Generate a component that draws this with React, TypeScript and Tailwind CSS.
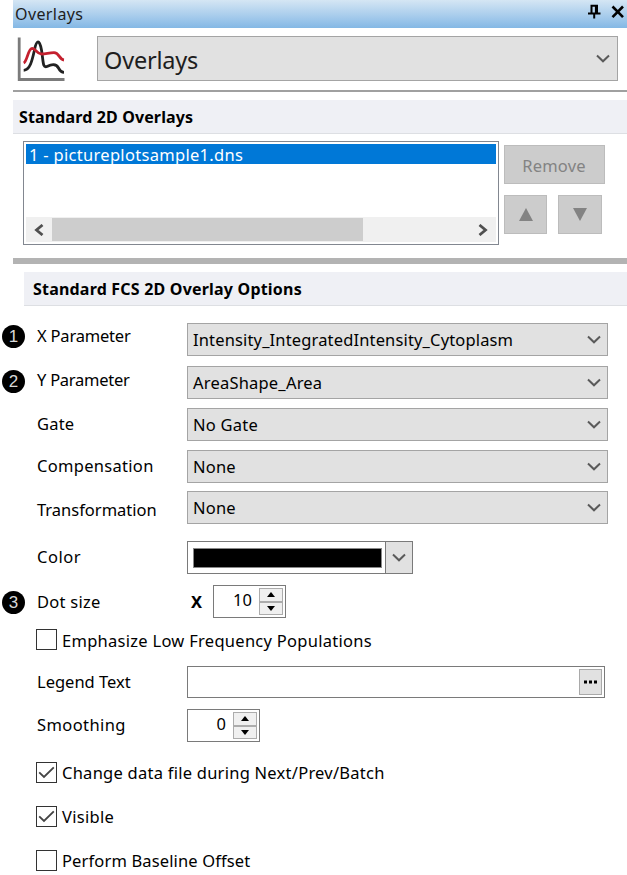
import React, { useState } from "react";

interface SelectProps {
  value: string;
  textClass: string;
}

const Chevron = () => (
  <svg width="14" height="9" viewBox="0 0 14 9" fill="none" className="shrink-0">
    <path d="M1 1.5 7 7.3 13 1.5" stroke="#5a5a5a" strokeWidth="2" />
  </svg>
);

const Select: React.FC<SelectProps> = ({ value, textClass }) => (
  <button className="flex h-[33px] w-[421px] items-center justify-between border border-[#a4a4a4] bg-[#e1e1e1] pl-[5px] pr-[6px] text-left">
    <span className={textClass}>{value}</span>
    <Chevron />
  </button>
);

interface RowProps {
  label: string;
  rowClass: string;
  labelClass: string;
  badge?: string;
  badgeClass?: string;
  children: React.ReactNode;
}

// Numbered badge, label and the control next to it
const Row: React.FC<RowProps> = ({
  label,
  rowClass,
  labelClass,
  badge,
  badgeClass,
  children,
}) => (
  <div className={`flex items-start ${rowClass}`}>
    <div className="w-[37px] shrink-0 pl-[2px]">
      {badge && (
        <div
          className={`flex h-[23px] w-[23px] items-center justify-center rounded-full bg-black font-['Liberation_Sans',sans-serif] text-[17px] text-[#d8d8d8] ${badgeClass}`}
        >
          {badge}
        </div>
      )}
    </div>
    <div className="w-[150px] shrink-0">
      <span className={`block ${labelClass}`}>{label}</span>
    </div>
    {children}
  </div>
);

interface SpinnerProps {
  value: number;
  onChange: (value: number) => void;
}

const Spinner: React.FC<SpinnerProps> = ({ value, onChange }) => (
  <div className="flex h-[33px] w-[73px] items-center justify-end border border-[#7a7a7a] bg-white pr-[2px]">
    <span className="mb-[3px] mr-[7px]">{value}</span>
    <div className="flex h-[27px] w-[24px] flex-col border border-[#acacac] bg-[#f0f0f0]">
      <button
        onClick={() => onChange(value + 1)}
        className="flex flex-1 items-center justify-center border-b border-[#acacac]"
      >
        <svg width="8" height="5" viewBox="0 0 8 5">
          <path d="M4 0 8 5H0Z" />
        </svg>
      </button>
      <button
        onClick={() => onChange(Math.max(0, value - 1))}
        className="flex flex-1 items-center justify-center border-t border-[#acacac]"
      >
        <svg width="8" height="5" viewBox="0 0 8 5">
          <path d="M0 0H8L4 5Z" />
        </svg>
      </button>
    </div>
  </div>
);

interface CheckProps {
  label: string;
  checked: boolean;
  onToggle: () => void;
  rowClass: string;
  textClass: string;
}

const Check: React.FC<CheckProps> = ({
  label,
  checked,
  onToggle,
  rowClass,
  textClass,
}) => (
  <div className={`flex items-start pl-[36px] ${rowClass}`}>
    <button onClick={onToggle} className="flex h-[21px] items-center">
      <span className="flex h-[21px] w-[21px] items-center justify-center border border-[#333] bg-white">
        {checked && (
          <svg width="17" height="17" viewBox="0 0 17 17" fill="none">
            <path d="M1.2 8.3 6 13 15.8 3.3" stroke="#444" strokeWidth="1.8" />
          </svg>
        )}
      </span>
      <span className={`ml-[5px] ${textClass}`}>{label}</span>
    </button>
  </div>
);

export default function App() {
  const [dotSize, setDotSize] = useState(10);
  const [smoothing, setSmoothing] = useState(0);
  const [emphasize, setEmphasize] = useState(false);
  const [changeFile, setChangeFile] = useState(true);
  const [visible, setVisible] = useState(true);
  const [baseline, setBaseline] = useState(false);

  return (
    <div className="h-[875px] w-[627px] overflow-hidden whitespace-nowrap bg-white font-['Noto_Sans','Open_Sans',sans-serif] text-[16.5px] leading-[24px] text-black">
      <div className="pl-[13px]">
        {/* Title bar */}
        <div className="flex h-[28px] items-center justify-between bg-linear-to-b from-[#d5e6f4] to-[#84b8e5] pl-[2px] pr-[2px]">
          <span className="text-[16px] tracking-[0.4px] text-[#1e1e1e]">Overlays</span>
          <div className="flex items-center gap-[10px] pb-[4px]">
            <svg width="14" height="16" viewBox="0 0 14 16" fill="none" stroke="#000">
              <path d="M4.5 9V1.8H10V9M1 9.6H13.5M7.2 10V14.4" strokeWidth="2" />
              <path d="M9.3 2V9" strokeWidth="2.8" />
            </svg>
            <svg width="14" height="14" viewBox="0 0 14 14" fill="none" stroke="#000">
              <path d="M1.5 1.5 12 12.2M12 1.5 1.5 12.2" strokeWidth="2.6" />
            </svg>
          </div>
        </div>

        {/* Section picker */}
        <div className="flex h-[62px] items-start pl-[4px] pt-[8px]">
          <svg width="49" height="46" viewBox="0 0 49 46" fill="none" className="mr-[31px]">
            <path d="M2.2 1.5V43.5H47.5" stroke="#7b7b7b" strokeWidth="2.8" />
            <path
              d="M6.7 34.3C13 34 15 25 17.5 14C19.5 3.5 22.5 3 24.5 14C26.5 26 25.5 32 30 30.5C34 28.5 39 27 41.5 32C43 35 44.5 36.3 47 36.3"
              stroke="#222"
              strokeWidth="2.8"
            />
            <path
              d="M6.7 27C10.5 25 11 12.3 15.2 12.3C19 12.5 19.5 18 24.5 18C29 18 32 16.7 37 16.7C42.5 16.7 42 23.5 47 24"
              stroke="#c4202e"
              strokeWidth="2.8"
            />
          </svg>
          <button className="flex h-[45px] w-[521px] items-center justify-between border border-[#a4a4a4] bg-[#e1e1e1] pl-[6px] pr-[7px]">
            <span className="pt-[2px] text-[23.5px] leading-[32px] tracking-[-0.2px] text-[#1e1e1e]">
              Overlays
            </span>
            <Chevron />
          </button>
        </div>
        <div className="h-[2px] bg-[#a0a0a0]" />

        {/* Overlay list */}
        <h2 className="mt-[8px] flex h-[34px] items-center border-b border-[#dddfe3] bg-[#eff0f5] pl-[6px] font-bold">
          <span className="text-[16px] tracking-[0.13px]">Standard 2D Overlays</span>
        </h2>
        <div className="flex h-[123px] items-start pl-[10px] pt-[7px]">
          <div className="flex h-[104px] w-[476px] flex-col justify-between border border-[#828790] bg-white p-[2px]">
            <div className="flex h-[20px] items-center bg-[#0078d7] pl-[3px] text-white">
              <span className="pt-px tracking-[0.3px]">1 - pictureplotsample1.dns</span>
            </div>
            <div className="flex h-[25px] items-center justify-between bg-[#f0f0f0] pr-[8px]">
              <div className="flex h-full items-center">
                <div className="flex w-[26px] justify-center">
                  <svg width="10" height="12" viewBox="0 0 10 12" fill="none">
                    <path d="M8.5 1 2.5 6 8.5 11" stroke="#505050" strokeWidth="2.8" />
                  </svg>
                </div>
                <div className="h-[23px] w-[311px] bg-[#cdcdcd]" />
              </div>
              <svg width="10" height="12" viewBox="0 0 10 12" fill="none">
                <path d="M1.5 1 7.5 6 1.5 11" stroke="#505050" strokeWidth="2.8" />
              </svg>
            </div>
          </div>
          <div className="ml-[5px] mt-[4px]">
            <button className="flex h-[39px] w-[101px] items-center justify-center border border-[#bcbcbc] bg-[#cccccc] text-[#838383]">
              <span className="pr-px pt-[2px] tracking-[0.2px]">Remove</span>
            </button>
            <div className="mt-[11px] flex gap-[11px]">
              <button className="flex h-[39px] w-[43px] items-center justify-center border border-[#bcbcbc] bg-[#cccccc]">
                <svg width="14" height="13" viewBox="0 0 14 13" fill="#838383">
                  <path d="M7 0 14 13H0Z" />
                </svg>
              </button>
              <button className="flex h-[39px] w-[44px] items-center justify-center border border-[#bcbcbc] bg-[#cccccc]">
                <svg width="14" height="13" viewBox="0 0 14 13" fill="#838383">
                  <path d="M0 0H14L7 13Z" />
                </svg>
              </button>
            </div>
          </div>
        </div>
        <div className="mt-px h-[6px] bg-[#b3b3b3]" />
        <h2 className="ml-[11px] mt-[8px] flex h-[34px] items-center border-b border-[#dddfe3] bg-[#eff0f5] pl-[9px] font-bold">
          <span className="text-[16px] tracking-[0.2px]">Standard FCS 2D Overlay Options</span>
        </h2>
      </div>

      {/* Overlay options */}
      <div className="pt-[17px]">
        <Row
          label="X Parameter"
          rowClass="h-[43px]"
          labelClass="mt-px tracking-[-0.2px]"
          badge="1"
          badgeClass="mt-[2px]"
        >
          <Select
            value="Intensity_IntegratedIntensity_Cytoplasm"
            textClass="pt-px tracking-[0.15px]"
          />
        </Row>
        <Row
          label="Y Parameter"
          rowClass="h-[42px]"
          labelClass="mt-[2px] tracking-[-0.25px]"
          badge="2"
          badgeClass="mt-[4px]"
        >
          <Select value="AreaShape_Area" textClass="tracking-[0.2px]" />
        </Row>
        <Row label="Gate" rowClass="h-[42px]" labelClass="mt-[4px] tracking-[0.2px]">
          <Select value="No Gate" textClass="tracking-[0.25px]" />
        </Row>
        <Row label="Compensation" rowClass="h-[41px]" labelClass="mt-[4px] tracking-[0.3px]">
          <Select value="None" textClass="tracking-[0.2px]" />
        </Row>
        <Row label="Transformation" rowClass="h-[50px]" labelClass="mt-[7px]">
          <Select value="None" textClass="tracking-[0.2px]" />
        </Row>
        <Row label="Color" rowClass="h-[44px]" labelClass="mt-[4px] tracking-[0.5px]">
          <div className="flex h-[33px] w-[226px] items-center border border-[#7a7a7a] bg-white pl-[5px]">
            <div className="h-[20px] w-[189px] border border-[#888] bg-black" />
            <button className="ml-auto flex h-full w-[27px] items-center justify-center border-l border-[#7a7a7a] bg-[#e1e1e1]">
              <Chevron />
            </button>
          </div>
        </Row>
        <Row
          label="Dot size"
          rowClass="h-[44px]"
          labelClass="mt-[5px] tracking-[0.25px]"
          badge="3"
          badgeClass="mt-[6px]"
        >
          <span className="ml-[4px] mt-[5px] w-[22px] font-bold">X</span>
          <Spinner value={dotSize} onChange={setDotSize} />
        </Row>
        <Check
          label="Emphasize Low Frequency Populations"
          checked={emphasize}
          onToggle={() => setEmphasize(!emphasize)}
          rowClass="h-[37px]"
          textClass="pt-[2px] tracking-[0.28px]"
        />
        <Row label="Legend Text" rowClass="h-[43px]" labelClass="mt-[4px]">
          <div className="flex h-[32px] w-[418px] items-center justify-end border border-[#7a7a7a] bg-white pr-[2px]">
            <button className="flex h-[26px] w-[23px] items-center justify-center border border-[#a9a9a9] bg-[#e1e1e1]">
              <svg width="14" height="4" viewBox="0 0 14 4">
                <path d="M0 .5H3V3.5H0ZM5 .5H8V3.5H5ZM10 .5H13V3.5H10Z" />
              </svg>
            </button>
          </div>
        </Row>
        <Row label="Smoothing" rowClass="h-[53px]" labelClass="mt-[4px] tracking-[0.4px]">
          <Spinner value={smoothing} onChange={setSmoothing} />
        </Row>
        <Check
          label="Change data file during Next/Prev/Batch"
          checked={changeFile}
          onToggle={() => setChangeFile(!changeFile)}
          rowClass="h-[44px]"
          textClass="pt-px tracking-[0.25px]"
        />
        <Check
          label="Visible"
          checked={visible}
          onToggle={() => setVisible(!visible)}
          rowClass="h-[44px]"
          textClass="pt-px tracking-[0.3px]"
        />
        <Check
          label="Perform Baseline Offset"
          checked={baseline}
          onToggle={() => setBaseline(!baseline)}
          rowClass="h-[24px]"
          textClass="pt-px tracking-[0.14px]"
        />
      </div>
    </div>
  );
}
